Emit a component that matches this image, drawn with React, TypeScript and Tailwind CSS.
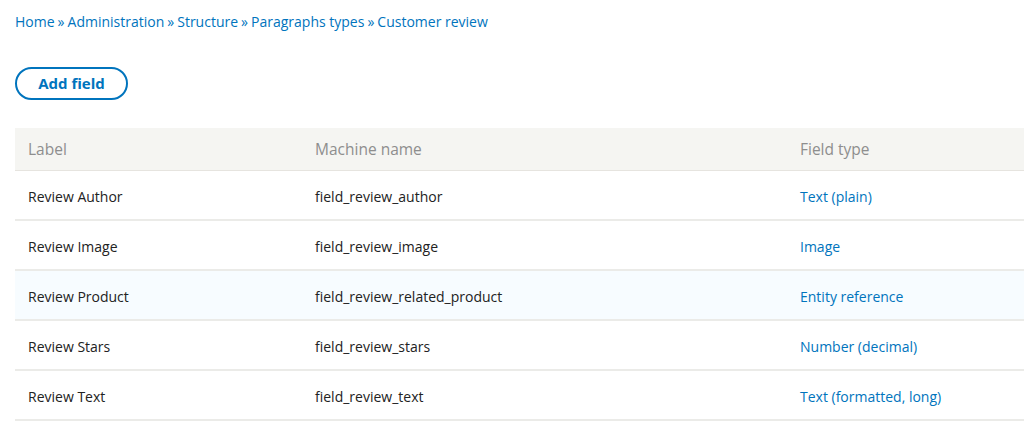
import React from "react";

const rows = [
  { label: "Review Author", machine: "field_review_author", type: "Text (plain)" },
  { label: "Review Image", machine: "field_review_image", type: "Image" },
  { label: "Review Product", machine: "field_review_related_product", type: "Entity reference", hl: true },
  { label: "Review Stars", machine: "field_review_stars", type: "Number (decimal)" },
  { label: "Review Text", machine: "field_review_text", type: "Text (formatted, long)" },
];

const crumbs = ["Home", "Administration", "Structure", "Paragraphs types", "Customer review"];

export default function App() {
  return (
    <div className="w-[1024px] h-[444px] bg-white overflow-hidden" style={{ fontFamily: '"Open Sans", "Liberation Sans", sans-serif' }}>
      <div className="pl-[15px] pt-[12px]">
        <nav className="text-[14px] leading-[20px] text-[#0074bd] flex items-center">
          {crumbs.map((c, i) => (
            <React.Fragment key={c}>
              {i > 0 && <span className="text-[#0074bd] mx-[3px]">»</span>}
              <span>{c}</span>
            </React.Fragment>
          ))}
        </nav>
        <div className="mt-[35px]">
          <button className="w-[113px] h-[33px] rounded-full border-2 border-[#0074bd] text-[#0074bd] font-bold text-[15px] flex items-center justify-center bg-white">
            Add field
          </button>
        </div>
        <div className="mt-[28px] w-[1040px]">
          <div className="grid grid-cols-[287px_485px_1fr] h-[43px] items-center bg-[#f5f5f2] text-[#8e8e8e] text-[15.5px] border-b border-[#e6e4df]">
            <div className="pl-[13px] pt-[1px]">Label</div>
            <div className="pl-[13px] pt-[1px]">Machine name</div>
            <div className="pl-[13px] pt-[1px]">Field type</div>
          </div>
          {rows.map((r) => (
            <div
              key={r.label}
              className={`grid grid-cols-[287px_485px_1fr] h-[50px] items-center text-[14px] text-[#222] border-b-2 border-[#ebebe8] ${r.hl ? "bg-[#f7fcff]" : "bg-white"}`}
            >
              <div className="pl-[13px] pt-[2px]">{r.label}</div>
              <div className="pl-[13px] pt-[2px]">{r.machine}</div>
              <div className="pl-[13px] pt-[2px] text-[#0074bd]">{r.type}</div>
            </div>
          ))}
        </div>
      </div>
    </div>
  );
}
